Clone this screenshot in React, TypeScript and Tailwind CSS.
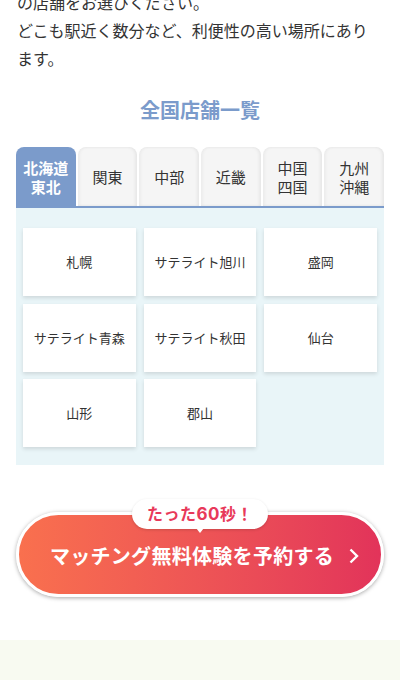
import React, { useState } from "react";

const FONT = "font-['Noto_Sans_CJK_JP','Noto_Sans',sans-serif]";

interface Area {
  id: string;
  label: string[];
  shops: string[];
}

const areas: Area[] = [
  {
    id: "hokkaido",
    label: ["北海道", "東北"],
    shops: ["札幌", "サテライト旭川", "盛岡", "サテライト青森", "サテライト秋田", "仙台", "山形", "郡山"],
  },
  { id: "kanto", label: ["関東"], shops: [] },
  { id: "chubu", label: ["中部"], shops: [] },
  { id: "kinki", label: ["近畿"], shops: [] },
  { id: "chugoku", label: ["中国", "四国"], shops: [] },
  { id: "kyushu", label: ["九州", "沖縄"], shops: [] },
];

function App() {
  const [active, setActive] = useState("hokkaido");
  const current = areas.find((a) => a.id === active) || areas[0];

  return (
    <div className={`${FONT} bg-white w-[400px] h-[680px] overflow-hidden`}>
      <div className="px-4">
        <p className="mt-[-12px] w-[354px] text-[16px] leading-[28px] text-[#333] pl-px">
          の店舗をお選びください。
          <br />
          どこも駅近く数分など、利便性の高い場所にあります。
        </p>

        <h2 className="mt-[23px] text-center text-[20px] leading-[30px] font-bold text-[#7b9bcb]">
          全国店舗一覧
        </h2>

        {/* tabs */}
        <div className="mt-[22px] flex gap-[2px] border-b-2 border-[#7b9bcb]">
          {areas.map((a) => {
            const on = a.id === active;
            return (
              <button
                key={a.id}
                onClick={() => setActive(a.id)}
                className={
                  on
                    ? "flex-1 h-[59px] rounded-t-[8px] bg-[#7b9bcb] text-white font-bold text-[15px] leading-[19px] flex flex-col items-center justify-center"
                    : "flex-1 h-[59px] rounded-t-[8px] bg-[#f5f5f5] text-[#333] text-[15px] leading-[19px] flex flex-col items-center justify-center shadow-[inset_-2px_0_3px_rgba(0,0,0,0.06),inset_2px_0_3px_rgba(0,0,0,0.04)]"
                }
              >
                {a.label.map((l) => (
                  <span key={l}>{l}</span>
                ))}
              </button>
            );
          })}
        </div>

        {/* shop list */}
        <div className="bg-[#e9f5f8] px-[7px] pt-[20px] pb-[18px] min-h-[257px]">
          <div className="grid grid-cols-3 gap-x-[8px] gap-y-[7.5px]">
            {current.shops.map((s) => (
              <div
                key={s}
                className="h-[68px] bg-white flex items-center justify-center text-[13px] text-[#333] shadow-[0_2px_4px_rgba(0,0,0,0.12)]"
              >
                {s}
              </div>
            ))}
          </div>
        </div>

        {/* cta */}
        <div className="mt-[47px] relative">
          <div className="absolute left-1/2 -translate-x-1/2 top-[-13px] z-10">
            <div className="relative w-[136px] h-[30px] rounded-full bg-white flex items-center justify-center shadow-[0_1px_3px_rgba(0,0,0,0.15)]">
              <span className="text-[16px] font-bold text-[#e8395a] tracking-[0.5px]">
                たった<span className="font-['Inter',sans-serif] text-[17px]">60</span>秒！
              </span>
              <span className="absolute left-1/2 -translate-x-1/2 bottom-[-4px] w-0 h-0 border-x-[4px] border-x-transparent border-t-[5px] border-t-white" />
            </div>
          </div>
          <button className="w-full h-[85px] rounded-full border-[3px] border-white bg-gradient-to-r from-[#f9704e] to-[#e2335a] shadow-[0_1px_4px_rgba(0,0,0,0.35)] flex items-center justify-center gap-[14px] pt-[3px]">
            <span className="text-white font-bold text-[20px] tracking-[0.3px] ml-[10px]">
              マッチング無料体験を予約する
            </span>
            <svg width="12" height="18" viewBox="0 0 12 18" fill="none">
              <path d="M2.5 2.5 L9 9 L2.5 15.5" stroke="white" strokeWidth="2.4" />
            </svg>
          </button>
        </div>
      </div>

      <div className="mt-[43px] h-[60px] bg-[#f8faf1]" />
    </div>
  );
}

export default App;
